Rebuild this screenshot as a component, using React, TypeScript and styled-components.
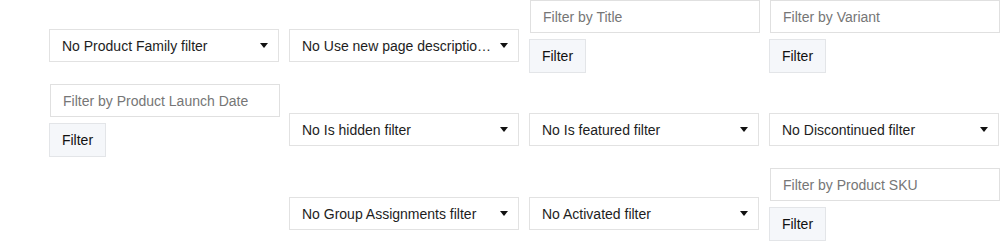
import React from "react";
import styled, { createGlobalStyle } from "styled-components";

const Global = createGlobalStyle`
  html, body { margin: 0; padding: 0; background: #fff; }
  body { font-family: "Liberation Sans", Arial, Helvetica, sans-serif; }
  * { box-sizing: border-box; }
`;

const Grid = styled.div`
  display: grid;
  grid-template-columns: repeat(4, 240px);
  grid-auto-rows: 73px;
  row-gap: 11px;
  padding-left: 49px;
  align-items: start;
`;

const SelectCell = styled.div<{ $col?: number }>`
  padding-top: 29px;
  ${(p) => (p.$col ? `grid-column: ${p.$col};` : "")}
`;

const SelectBox = styled.div`
  width: 230px;
  height: 33px;
  border: 1px solid #e2e2e2;
  background: #fff;
  display: flex;
  align-items: center;
  gap: 6px;
  padding: 0 10px 0 12px;
  font-size: 14px;
  color: #1d1d1d;
`;

const SelectText = styled.span`
  flex: 1;
  min-width: 0;
  white-space: nowrap;
  overflow: hidden;
  text-overflow: ellipsis;
`;

const Caret = styled.svg`
  flex: none;
  width: 8px;
  height: 5px;
`;

const InputCell = styled.div<{ $col?: number }>`
  display: flex;
  flex-direction: column;
  align-items: flex-start;
  gap: 6px;
  ${(p) => (p.$col ? `grid-column: ${p.$col};` : "")}
`;

const TextInput = styled.input`
  width: 230px;
  height: 33px;
  margin: 0 0 0 1px;
  border: 1px solid #e0e0e0;
  padding: 0 12px;
  font-family: "Liberation Sans", Arial, Helvetica, sans-serif;
  font-size: 14px;
  color: #222;
  background: #fff;
  outline: none;
  &::placeholder { color: #767676; }
`;

const Button = styled.button`
  width: 57px;
  height: 34px;
  border: 1px solid #e3e5e8;
  background: #f5f7fa;
  border-radius: 0;
  font-family: "Liberation Sans", Arial, Helvetica, sans-serif;
  font-size: 14px;
  color: #111;
  padding: 0;
  cursor: pointer;
`;

const Select = ({ label, col }: { label: string; col?: number }) => (
  <SelectCell $col={col}>
    <SelectBox>
      <SelectText>{label}</SelectText>
      <Caret viewBox="0 0 8 5">
        <polygon points="0,0 8,0 4,5" fill="#111" />
      </Caret>
    </SelectBox>
  </SelectCell>
);

const TextFilter = ({ placeholder, col }: { placeholder: string; col?: number }) => (
  <InputCell $col={col}>
    <TextInput placeholder={placeholder} />
    <Button>Filter</Button>
  </InputCell>
);

export default function App() {
  return (
    <>
      <Global />
      <Grid>
        <Select label="No Product Family filter" />
        <Select label="No Use new page description filter" />
        <TextFilter placeholder="Filter by Title" />
        <TextFilter placeholder="Filter by Variant" />
        <TextFilter placeholder="Filter by Product Launch Date" />
        <Select label="No Is hidden filter" />
        <Select label="No Is featured filter" />
        <Select label="No Discontinued filter" />
        <Select label="No Group Assignments filter" col={2} />
        <Select label="No Activated filter" />
        <TextFilter placeholder="Filter by Product SKU" />
      </Grid>
    </>
  );
}
